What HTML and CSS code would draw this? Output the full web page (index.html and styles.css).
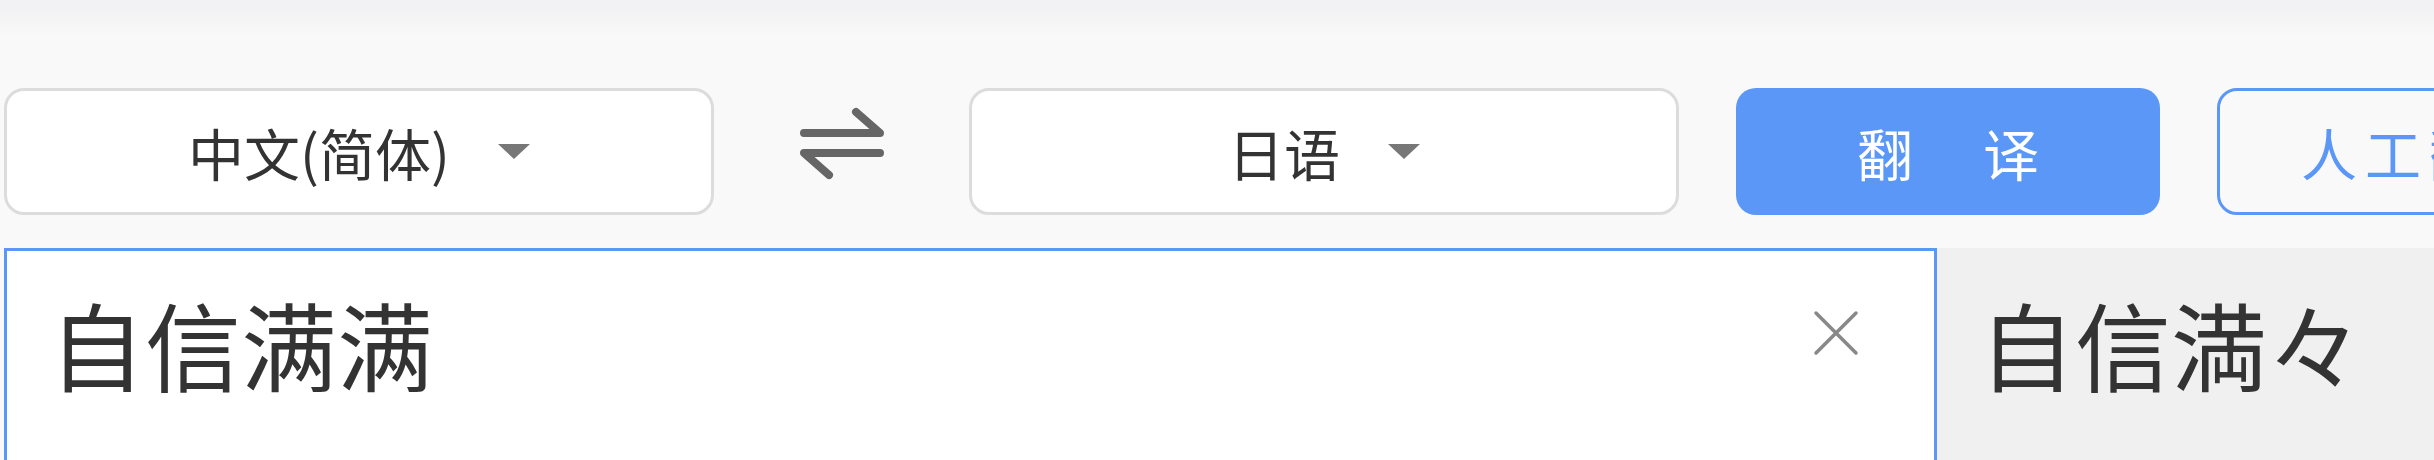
FILE: index.html
```html
<!DOCTYPE html>
<html lang="zh-CN">
  <head>
    <meta charset="UTF-8" />
    <meta
      name="viewport"
      content="width=device-width, initial-scale=1.0" />
    <title>翻译</title>
    <link rel="stylesheet" href="styles.css">
  </head>
  <body>
    <!-- 语言选择和操作按钮 -->
    <div class="toolbar">
      <div class="lang-select">
        <span class="lang-name">中文(简体)</span>
        <span class="caret"></span>
      </div>

      <div class="swap">
        <svg
          width="88"
          height="80"
          viewBox="0 0 88 80">
          <path d="M6 29 H82 L58 8" />
          <path d="M82 49 H6 L31 71" />
        </svg>
      </div>

      <div class="lang-select">
        <span class="lang-name">日语</span>
        <span class="caret"></span>
      </div>

      <button
        type="button"
        class="btn-translate">
        <span>翻</span>
        <span>译</span>
      </button>
      <button
        type="button"
        class="btn-human">
        人工翻译
      </button>
    </div>

    <!-- 输入框和翻译结果 -->
    <div class="workspace">
      <div class="source-box">
        <div class="source-text">自信满满</div>
        <button
          type="button"
          class="btn-clear">
          <svg
            width="48"
            height="48"
            viewBox="0 0 48 48">
            <path d="M4 4 L44 44 M44 4 L4 44" />
          </svg>
        </button>
      </div>
      <div class="result-box">
        <div class="result-text">自信満々</div>
      </div>
    </div>
  </body>
</html>
```

FILE: styles.css
```css
/* 基本样式 */
html,
body {
  margin: 0;
  padding: 0;
  height: 100%;
}

body {
  font-family: 'Noto Sans CJK SC', 'Noto Sans', sans-serif;
  color: #333;
  background: linear-gradient(#f2f2f4 0, #f2f2f4 12px, #f9f9f9 36px) no-repeat;
  background-color: #f9f9f9;
  overflow: hidden;
}

/* 顶部工具栏 */
.toolbar {
  display: flex;
  height: 127px;
  padding: 88px 0 0 4px;
}

.lang-select {
  flex-shrink: 0;
  box-sizing: border-box;
  width: 710px;
  height: 127px;
  display: flex;
  align-items: center;
  justify-content: center;
  background: #fff;
  border: 3px solid #dcdcdc;
  border-radius: 20px;
  font-size: 56px;
}

/* 下拉三角 */
.caret {
  width: 0;
  height: 0;
  margin-left: 48px;
  border-left: 16px solid transparent;
  border-right: 16px solid transparent;
  border-top: 15px solid #777;
}

.swap {
  flex-shrink: 0;
  width: 255px;
  display: flex;
  justify-content: center;
  align-items: flex-start;
  padding-top: 16px;
  box-sizing: border-box;
}

.swap path {
  fill: none;
  stroke: #666;
  stroke-width: 8;
  stroke-linecap: round;
  stroke-linejoin: round;
}

.btn-translate,
.btn-human {
  flex-shrink: 0;
  box-sizing: border-box;
  width: 424px;
  height: 127px;
  margin-left: 57px;
  border-radius: 20px;
  font-family: inherit;
  font-size: 56px;
  cursor: pointer;
}

.btn-translate {
  display: flex;
  align-items: center;
  justify-content: center;
  gap: 70px;
  background-color: #5a97f7;
  border: none;
  color: #fff;
}

.btn-human {
  background: transparent;
  border: 3px solid #5a97f7;
  color: #5a97f7;
  letter-spacing: 8px;
  text-align: center;
  padding: 0;
}

/* 输入和结果区域 */
.workspace {
  display: flex;
  margin-top: 33px;
  padding-left: 4px;
  height: 260px;
}

.source-box {
  flex-shrink: 0;
  box-sizing: border-box;
  width: 1933px;
  display: flex;
  background: #fff;
  border: 3px solid #5a97f7;
}

.source-text,
.result-text {
  font-size: 96px;
  line-height: 1.4;
}

.source-text {
  flex: 1;
  padding: 25px 0 0 42px;
}

.btn-clear {
  align-self: flex-start;
  margin: 58px 74px 0 0;
  padding: 0;
  border: none;
  background: none;
  line-height: 0;
}

.btn-clear path {
  fill: none;
  stroke: #888;
  stroke-width: 3.5;
  stroke-linecap: round;
}

.result-box {
  flex: 1;
  background: #f0f0f0;
}

.result-text {
  padding: 28px 0 0 42px;
}
```
